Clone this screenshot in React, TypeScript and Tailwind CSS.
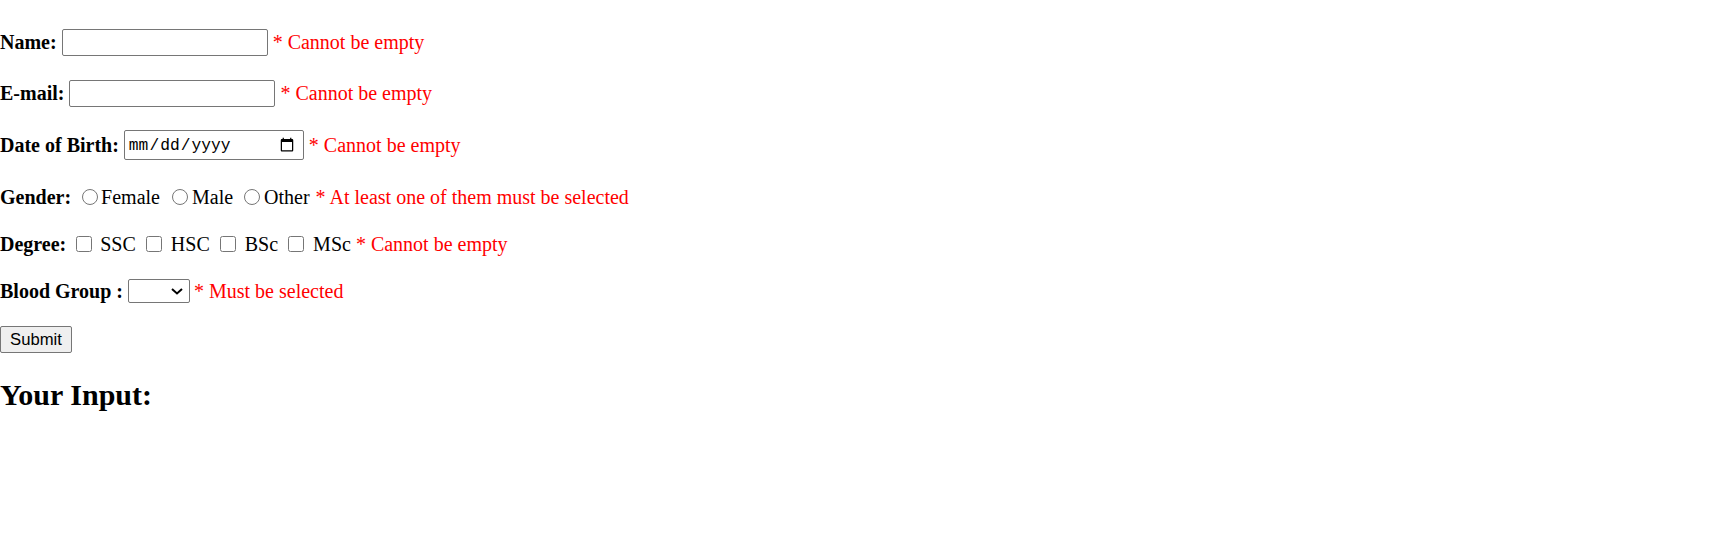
import React from "react";

const serif = "font-['Liberation_Serif','Times_New_Roman',serif]";

export default function App() {
  return (
    <div className="min-h-screen w-full bg-white text-black font-['Liberation_Serif','Times_New_Roman',serif] text-[20px] leading-[23px]">
      <form className="flex flex-col" onSubmit={(e) => e.preventDefault()}>
        {/* Name */}
        <div className="mt-[29px] flex h-[27px] items-center">
          <b className="font-bold">Name:</b>
          <input
            type="text"
            className="ml-[5px] h-[27px] w-[206px] rounded-[2px] border border-[#767676] bg-white px-[3px] font-['Liberation_Sans',Arial,sans-serif] text-[16.67px]"
          />
          <span className="ml-[5px] text-[#ff0000]">* Cannot be empty</span>
        </div>

        {/* Email */}
        <div className="mt-[24px] flex h-[27px] items-center">
          <b className="font-bold">E-mail:</b>
          <input
            type="email"
            className="ml-[5px] h-[27px] w-[206px] rounded-[2px] border border-[#767676] bg-white px-[3px] font-['Liberation_Sans',Arial,sans-serif] text-[16.67px]"
          />
          <span className="ml-[5px] text-[#ff0000]">* Cannot be empty</span>
        </div>

        {/* Date of Birth */}
        <div className="mt-[23px] flex h-[30px] items-center">
          <b className="font-bold">Date of Birth:</b>
          <input
            type="date"
            className="ml-[5px] h-[30px] w-[180px] rounded-[2px] border border-[#767676] bg-white pl-[3px] pr-[6px] font-['Liberation_Mono','Courier_New',monospace] text-[16.25px]"
          />
          <span className="ml-[5px] text-[#ff0000]">* Cannot be empty</span>
        </div>

        {/* Gender */}
        <div className="mt-[25px] flex h-[24px] items-center">
          <b className="font-bold">Gender:</b>
          <input type="radio" name="gender" className="ml-[11px] mr-[3px] h-[16px] w-[16px]" />
          <span>Female</span>
          <input type="radio" name="gender" className="ml-[12px] mr-[4px] h-[16px] w-[16px]" />
          <span>Male</span>
          <input type="radio" name="gender" className="ml-[11px] mr-[4px] h-[16px] w-[16px]" />
          <span>Other</span>
          <span className="ml-[6px] text-[#ff0000]">* At least one of them must be selected</span>
        </div>

        {/* Degree */}
        <div className="mt-[23px] flex h-[24px] items-center">
          <b className="font-bold">Degree:</b>
          <input type="checkbox" className="ml-[10px] mr-[4px] h-[16px] w-[16px]" />
          <span className="ml-[4px]">SSC</span>
          <input type="checkbox" className="ml-[10px] mr-[4px] h-[16px] w-[16px]" />
          <span className="ml-[5px]">HSC</span>
          <input type="checkbox" className="ml-[10px] mr-[4px] h-[16px] w-[16px]" />
          <span className="ml-[5px]">BSc</span>
          <input type="checkbox" className="ml-[10px] mr-[4px] h-[16px] w-[16px]" />
          <span className="ml-[5px]">MSc</span>
          <span className="ml-[5px] text-[#ff0000]">* Cannot be empty</span>
        </div>

        {/* Blood group */}
        <div className="mt-[23px] flex h-[24px] items-center">
          <b className="font-bold">Blood Group :</b>
          <div className="relative ml-[5px] h-[24px] w-[62px]">
            <select className="h-[24px] w-[62px] appearance-none rounded-[2px] border border-[#767676] bg-white font-['Liberation_Sans',Arial,sans-serif] text-[16.67px]">
              <option value=""></option>
              <option>A+</option>
              <option>A-</option>
              <option>B+</option>
              <option>B-</option>
              <option>O+</option>
              <option>O-</option>
              <option>AB+</option>
              <option>AB-</option>
            </select>
            <svg
              className="pointer-events-none absolute right-[7px] top-[9px]"
              width="12"
              height="7"
              viewBox="0 0 12 7"
              fill="none"
            >
              <path d="M1 1l5 4.5L11 1" stroke="#000" strokeWidth="2" />
            </svg>
          </div>
          <span className="ml-[4px] text-[#ff0000]">* Must be selected</span>
        </div>

        {/* Submit */}
        <div className="mt-[23px] flex h-[27px] items-center">
          <button
            type="submit"
            className="h-[27px] w-[72px] rounded-[2px] border border-[#767676] bg-[#efefef] font-['Liberation_Sans',Arial,sans-serif] text-[16.67px] leading-[19px] text-black"
          >
            Submit
          </button>
        </div>

        <h2 className={`mt-[25px] ${serif} text-[30px] font-bold leading-[34px]`}>Your Input:</h2>
      </form>
    </div>
  );
}
